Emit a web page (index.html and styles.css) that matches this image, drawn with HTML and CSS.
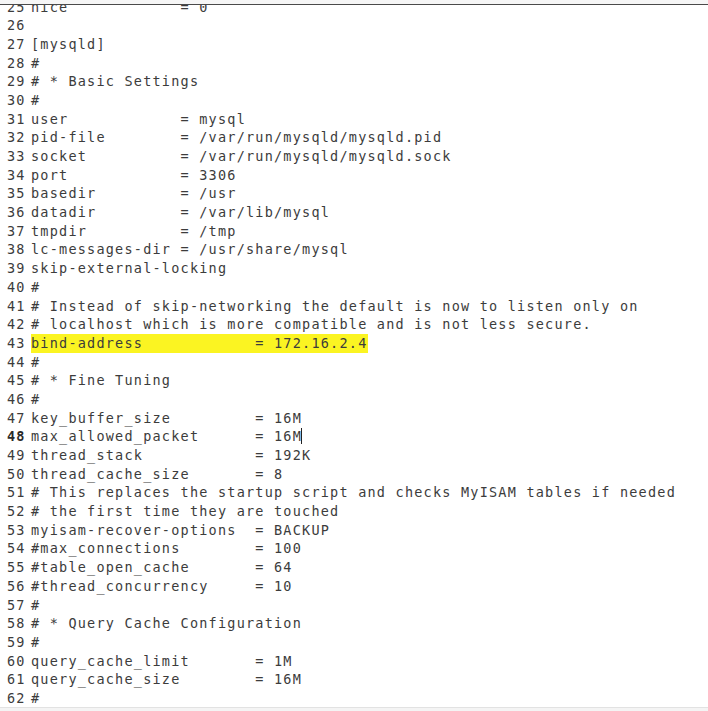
FILE: index.html
```html
<!DOCTYPE html>
<html>
<head>
<meta charset="utf-8">
<link rel="stylesheet" href="styles.css">
</head>
<body>
<div class="window">
  <div class="topbar"></div>
  <div class="viewport">
    <div class="code">
      <div class="line"><span class="ln">25</span><span class="tx">nice            = 0</span></div>
      <div class="line"><span class="ln">26</span><span class="tx"></span></div>
      <div class="line"><span class="ln">27</span><span class="tx">[mysqld]</span></div>
      <div class="line"><span class="ln">28</span><span class="tx">#</span></div>
      <div class="line"><span class="ln">29</span><span class="tx"># * Basic Settings</span></div>
      <div class="line"><span class="ln">30</span><span class="tx">#</span></div>
      <div class="line"><span class="ln">31</span><span class="tx">user            = mysql</span></div>
      <div class="line"><span class="ln">32</span><span class="tx">pid-file        = /var/run/mysqld/mysqld.pid</span></div>
      <div class="line"><span class="ln">33</span><span class="tx">socket          = /var/run/mysqld/mysqld.sock</span></div>
      <div class="line"><span class="ln">34</span><span class="tx">port            = 3306</span></div>
      <div class="line"><span class="ln">35</span><span class="tx">basedir         = /usr</span></div>
      <div class="line"><span class="ln">36</span><span class="tx">datadir         = /var/lib/mysql</span></div>
      <div class="line"><span class="ln">37</span><span class="tx">tmpdir          = /tmp</span></div>
      <div class="line"><span class="ln">38</span><span class="tx">lc-messages-dir = /usr/share/mysql</span></div>
      <div class="line"><span class="ln">39</span><span class="tx">skip-external-locking</span></div>
      <div class="line"><span class="ln">40</span><span class="tx">#</span></div>
      <div class="line"><span class="ln">41</span><span class="tx"># Instead of skip-networking the default is now to listen only on</span></div>
      <div class="line"><span class="ln">42</span><span class="tx"># localhost which is more compatible and is not less secure.</span></div>
      <div class="line"><span class="ln">43</span><span class="tx"><span class="hl">bind-address            = 172.16.2.4</span></span></div>
      <div class="line"><span class="ln">44</span><span class="tx">#</span></div>
      <div class="line"><span class="ln">45</span><span class="tx"># * Fine Tuning</span></div>
      <div class="line"><span class="ln">46</span><span class="tx">#</span></div>
      <div class="line"><span class="ln">47</span><span class="tx">key_buffer_size         = 16M</span></div>
      <div class="line current"><span class="ln">48</span><span class="tx">max_allowed_packet      = 16M<span class="cursor"></span></span></div>
      <div class="line"><span class="ln">49</span><span class="tx">thread_stack            = 192K</span></div>
      <div class="line"><span class="ln">50</span><span class="tx">thread_cache_size       = 8</span></div>
      <div class="line"><span class="ln">51</span><span class="tx"># This replaces the startup script and checks MyISAM tables if needed</span></div>
      <div class="line"><span class="ln">52</span><span class="tx"># the first time they are touched</span></div>
      <div class="line"><span class="ln">53</span><span class="tx">myisam-recover-options  = BACKUP</span></div>
      <div class="line"><span class="ln">54</span><span class="tx">#max_connections        = 100</span></div>
      <div class="line"><span class="ln">55</span><span class="tx">#table_open_cache       = 64</span></div>
      <div class="line"><span class="ln">56</span><span class="tx">#thread_concurrency     = 10</span></div>
      <div class="line"><span class="ln">57</span><span class="tx">#</span></div>
      <div class="line"><span class="ln">58</span><span class="tx"># * Query Cache Configuration</span></div>
      <div class="line"><span class="ln">59</span><span class="tx">#</span></div>
      <div class="line"><span class="ln">60</span><span class="tx">query_cache_limit       = 1M</span></div>
      <div class="line"><span class="ln">61</span><span class="tx">query_cache_size        = 16M</span></div>
      <div class="line"><span class="ln">62</span><span class="tx">#</span></div>
    </div>
  </div>
  <div class="bottombar"></div>
</div>
</body>
</html>
```
FILE: styles.css
```css
html, body {
  margin: 0;
  padding: 0;
  background: #ffffff;
}
.window {
  width: 708px;
  height: 711px;
  display: flex;
  flex-direction: column;
  overflow: hidden;
}
.topbar {
  height: 4px;
  flex: none;
  background: #f6f6f6;
  border-bottom: 1.5px solid #4a4a4a;
}
.viewport {
  flex: 1;
  overflow: hidden;
  background: #ffffff;
}
.code {
  margin-top: -7.5px;
  font-family: "DejaVu Sans Mono", monospace;
  font-size: 13.5px;
  letter-spacing: 1.22px;
  line-height: 18.69px;
  color: #3c3c3c;
}
.line {
  display: flex;
  height: 18.69px;
  white-space: pre;
}
.ln {
  flex: none;
  width: 18.7px;
  padding-left: 7px;
  margin-right: 5.3px;
}
.current .ln {
  font-weight: bold;
  color: #2a2a2a;
}
.tx {
  flex: none;
}
.hl {
  display: inline-block;
  background: #fbf422;
}
.cursor {
  display: inline-block;
  width: 0;
  height: 16px;
  border-left: 1.3px solid #222;
  vertical-align: -3px;
  margin-left: -1px;
}
.bottombar {
  height: 3px;
  flex: none;
  background: #f4f4f4;
  border-top: 1px solid #e2e2e2;
}
```
